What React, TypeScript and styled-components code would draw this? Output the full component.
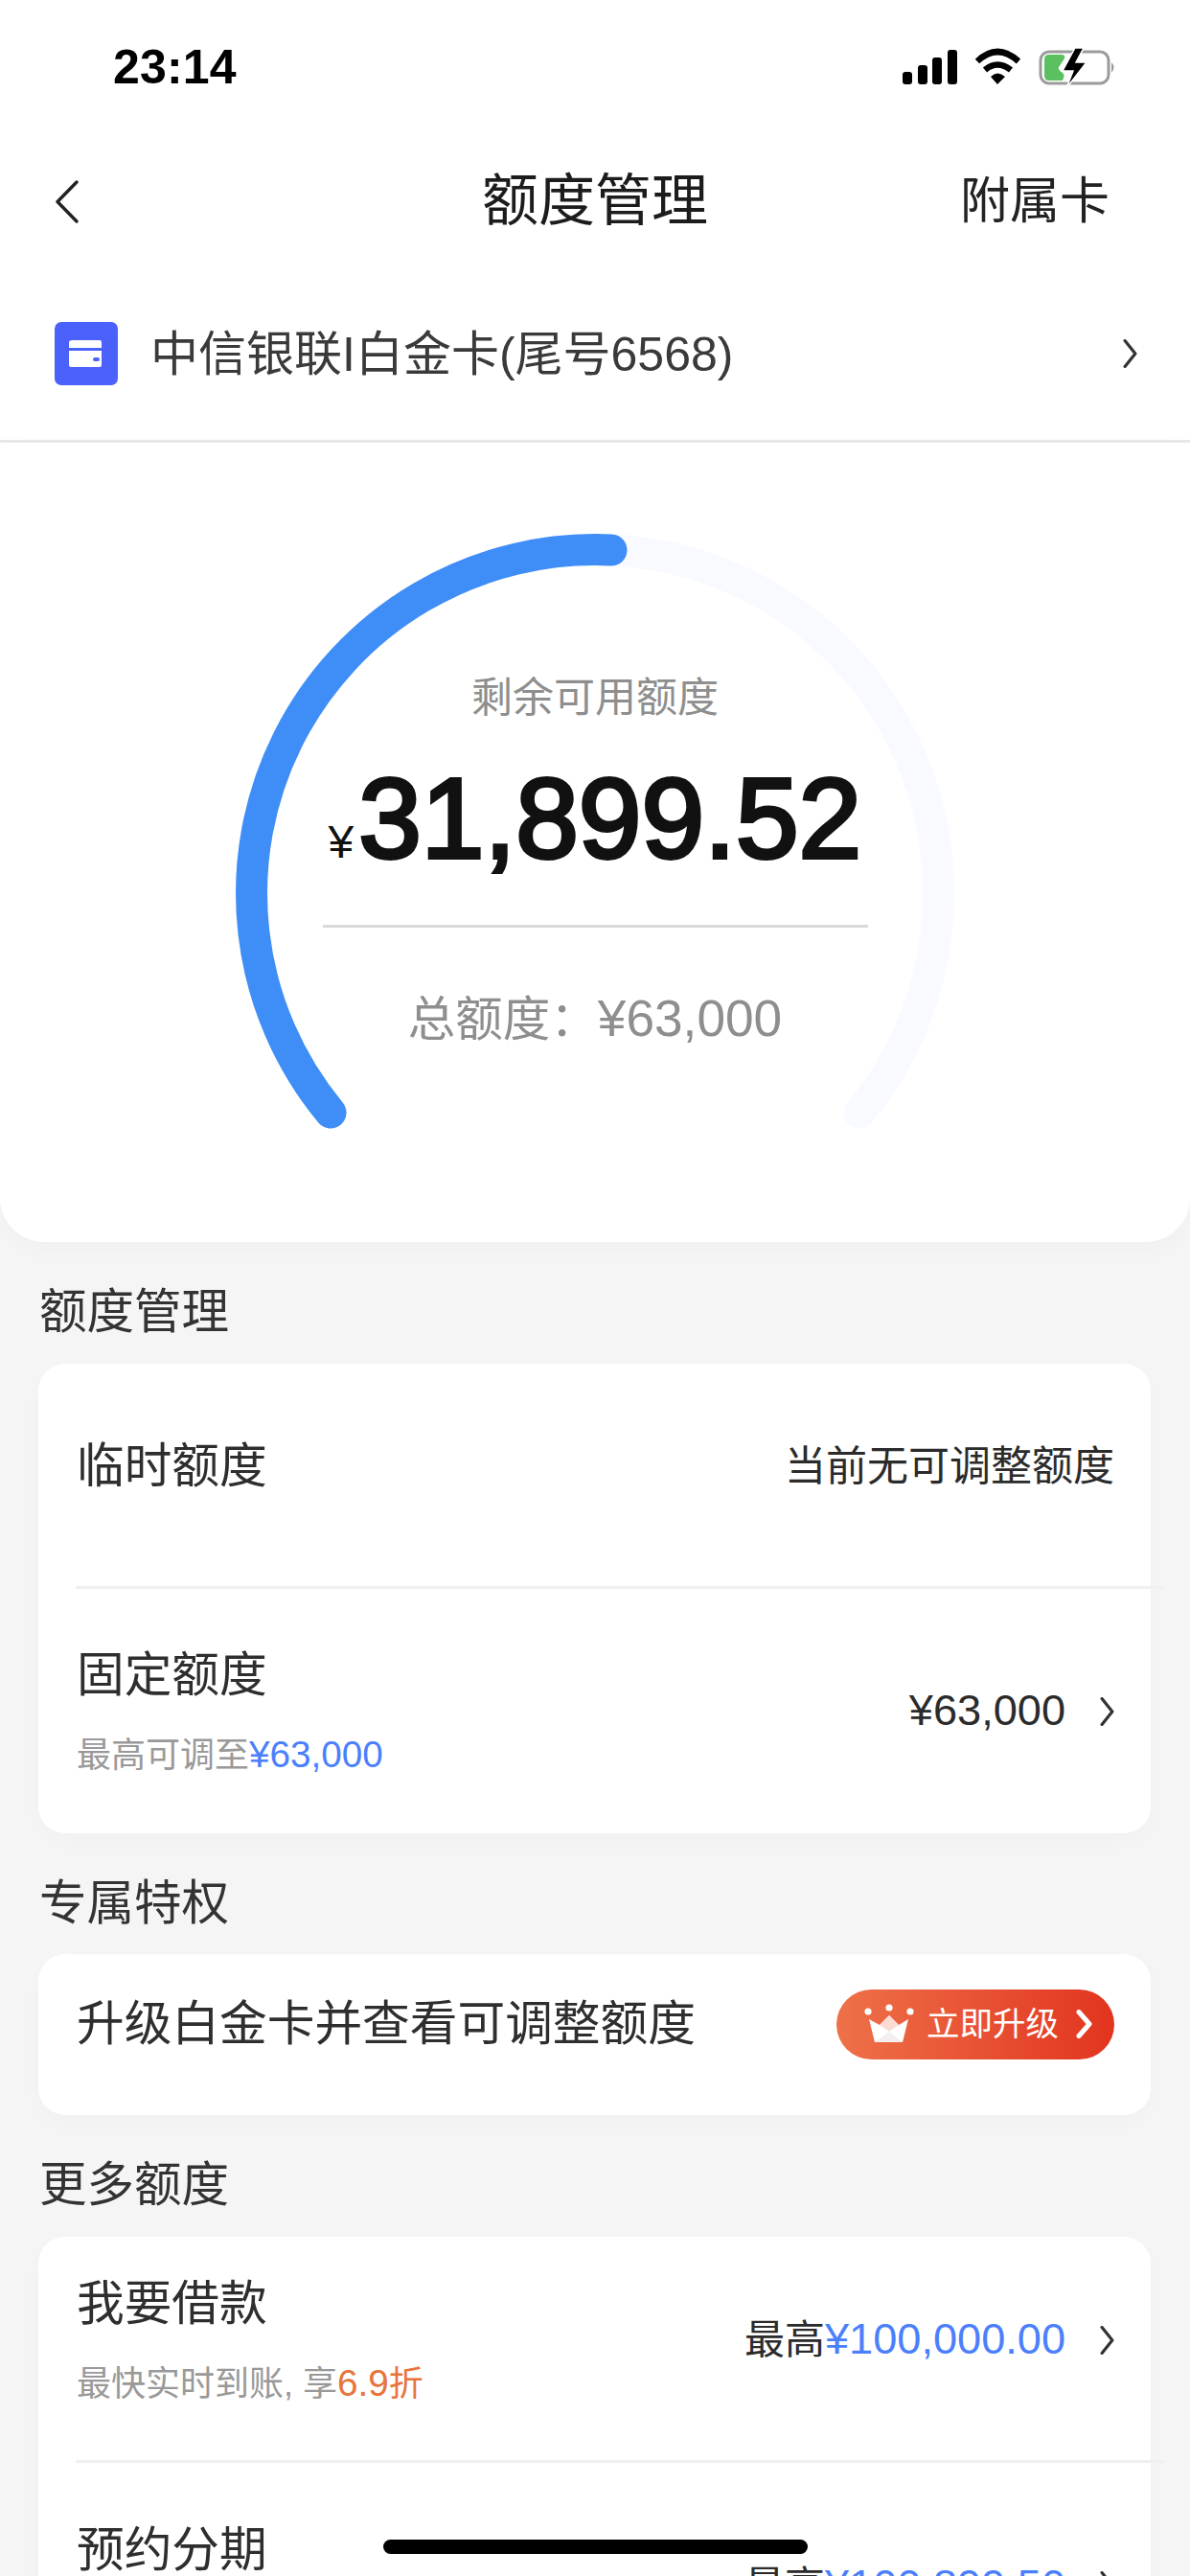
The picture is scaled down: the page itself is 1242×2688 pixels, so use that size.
import React from "react";
import styled, { createGlobalStyle } from "styled-components";

const Global = createGlobalStyle`
  html, body { margin: 0; padding: 0; background: #f5f5f5; }
  body { width: 1242px; height: 2688px; overflow: hidden; font-family: "Liberation Sans", "Noto Sans CJK SC", sans-serif; }
  * { box-sizing: border-box; }
`;

const Page = styled.div`
  position: relative;
  width: 1242px;
  height: 2688px;
  overflow: hidden;
  background: #f5f5f5;
  color: #333;
`;
const Header = styled.header`
  background: #fff;
`;
const StatusBar = styled.div`
  height: 140px;
  padding: 0 78px 0 118px;
  display: flex;
  align-items: center;
  justify-content: space-between;
`;
const Time = styled.span`
  font-size: 50px;
  font-weight: 700;
  color: #000;
  letter-spacing: 0.2px;
`;
const Nav = styled.nav`
  height: 138px;
  padding: 2px 57px 0;
  display: grid;
  grid-template-columns: 1fr auto 1fr;
  align-items: center;
`;
const NavTitle = styled.h1`
  margin: 0;
  font-size: 59px;
  font-weight: 400;
  line-height: 70px;
  color: #1c1c1c;
`;
const NavAction = styled.span`
  justify-self: end;
  padding-right: 27px;
  font-size: 52px;
  line-height: 60px;
  color: #222;
`;
const CardBar = styled.div`
  height: 184px;
  padding: 0 55px 0 57px;
  display: flex;
  align-items: center;
  gap: 34px;
  border-bottom: 3px solid #e8e8e8;
`;
const CardName = styled.span`
  flex: 1;
  padding-top: 2px;
  font-size: 50px;
  line-height: 60px;
  color: #3a3a3a;
`;
const Gauge = styled.section`
  position: relative;
  height: 834px;
  padding-top: 238px;
  display: flex;
  flex-direction: column;
  align-items: center;
  background: #fff;
  border-radius: 0 0 46px 46px;
  box-shadow: 0 8px 24px rgba(0, 0, 0, 0.025);
`;
const GaugeArc = styled.svg`
  position: absolute;
  left: 0;
  top: 0;
`;
const GaugeLabel = styled.div`
  position: relative;
  font-size: 43px;
  line-height: 56px;
  color: #8e8e8e;
`;
const Amount = styled.div`
  position: relative;
  margin-top: 31px;
  width: 569px;
  padding: 0 0 0 6px;
  display: flex;
  align-items: baseline;
  height: 134px;
  line-height: 134px;
  color: #111;
`;
const AmountUnit = styled.span`
  font-size: 48px;
  margin-right: 5px;
`;
const AmountValue = styled.span`
  font-size: 118px;
  font-weight: 400;
  -webkit-text-stroke: 4px #111;
`;
const GaugeRule = styled.div`
  position: relative;
  margin-top: 44px;
  width: 569px;
  height: 3px;
  background: #d9d9d9;
`;
const GaugeTotal = styled.div`
  position: relative;
  margin-top: 65px;
  font-size: 49.5px;
  line-height: 60px;
  color: #8e8e8e;
`;
const SectionTitle = styled.h2<{ $h: number }>`
  height: ${(p) => p.$h}px;
  margin: 0;
  padding: 43px 0 0 41px;
  font-size: 49.5px;
  font-weight: 400;
  line-height: 60px;
  color: #333;
`;
const Card = styled.div`
  width: 1161px;
  margin-left: 40px;
  background: #fff;
  border-radius: 28px;
  box-shadow: 0 8px 24px rgba(0, 0, 0, 0.02);
`;
const Row = styled.div<{ $h: number; $pb?: number }>`
  height: ${(p) => p.$h}px;
  padding: 0 38px ${(p) => p.$pb ?? 0}px 40px;
  display: flex;
  align-items: center;
  justify-content: space-between;
`;
const Divider = styled.div`
  height: 3px;
  margin: 0 -15px 0 39px;
  background: #f0f0f0;
`;
const RowLeft = styled.div`
  height: 135px;
  display: flex;
  flex-direction: column;
`;
const RowTitle = styled.div`
  font-size: 49.7px;
  line-height: 60px;
  color: #2e2e2e;
`;
const RowSub = styled.div`
  margin-top: 31px;
  font-size: 36px;
  line-height: 44px;
  color: #999;
`;
const RowRight = styled.div`
  display: flex;
  align-items: center;
  gap: 36px;
`;
const RowValue = styled.span<{ $size?: number }>`
  font-size: ${(p) => p.$size ?? 42}px;
  line-height: 50px;
  color: #2b2b2b;
`;
const Num = styled.span`
  font-size: 1.075em;
`;
const Blue = styled.span`
  color: #4b7ffb;
`;
const Orange = styled.span`
  color: #e8743b;
`;
const Upgrade = styled.div`
  width: 290px;
  height: 73px;
  padding-left: 29px;
  display: flex;
  align-items: center;
  border-radius: 37px;
  background: linear-gradient(90deg, #ee7149 0%, #e2341f 100%);
  color: #fff;
`;
const UpgradeText = styled.span`
  margin: 0 18px 0 13px;
  font-size: 34.5px;
  line-height: 40px;
`;
const HomeBar = styled.div`
  position: absolute;
  left: 400px;
  top: 2650px;
  width: 443px;
  height: 15px;
  border-radius: 8px;
  background: #000;
`;
const StatusIcons = styled.svg`
  display: block;
`;

const Chevron = ({ w, h, color = "#333", sw = 3.2 }: { w: number; h: number; color?: string; sw?: number }) => (
  <svg width={w} height={h} viewBox={`0 0 ${w} ${h}`} fill="none">
    <path d={`M${sw / 2 + 0.5} ${sw / 2} L${w - sw / 2 - 0.5} ${h / 2} L${sw / 2 + 0.5} ${h - sw / 2}`} stroke={color} strokeWidth={sw} strokeLinecap="round" strokeLinejoin="round" />
  </svg>
);

const BackChevron = () => (
  <svg width="25" height="45" viewBox="0 0 25 45" fill="none">
    <path d="M23 2 L3 22.5 L23 43" stroke="#222" strokeWidth="3.4" strokeLinecap="round" strokeLinejoin="round" />
  </svg>
);

const App = () => (
  <Page>
    <Global />
    <Header>
      <StatusBar>
        <Time>23:14</Time>
        <StatusIcons width="226" height="44" viewBox="937 48 226 44">
          <rect x="941" y="75" width="10" height="13" rx="3" fill="#000" />
          <rect x="957" y="68" width="10" height="20" rx="3" fill="#000" />
          <rect x="972" y="60" width="10" height="28" rx="3" fill="#000" />
          <rect x="988" y="52" width="10" height="36" rx="3" fill="#000" />
          <path d="M1019 64 Q1040 44 1062 64" fill="none" stroke="#000" strokeWidth="6.5" />
          <path d="M1027 73 Q1040 62 1054 73" fill="none" stroke="#000" strokeWidth="6.5" />
          <path d="M1033 80 Q1040 73 1048 80 L1040 88 Z" fill="#000" />
          <rect x="1085" y="54" width="71" height="33" rx="9" fill="none" stroke="#9b9b9b" strokeWidth="3" />
          <path d="M1159 65 Q1164 70 1159 76 Z" fill="#9b9b9b" />
          <path d="M1094 57 H1107 Q1111 57 1110 61 L1104 70 Q1103 73 1108 76 Q1111 78 1108 84 H1094 Q1089 84 1089 79 V62 Q1089 57 1094 57 Z" fill="#5ac060" />
          <path d="M1121 50 L1108 74 H1119 L1112 92 L1133 65 H1122 L1130 50 Z" fill="#000" stroke="#fff" strokeWidth="1.5" />
        </StatusIcons>
      </StatusBar>
      <Nav>
        <BackChevron />
        <NavTitle>额度管理</NavTitle>
        <NavAction>附属卡</NavAction>
      </Nav>
      <CardBar>
        <svg width="66" height="66" viewBox="0 0 66 66">
          <rect width="66" height="66" rx="7" fill="#4a62fb" />
          <path d="M19 19 H47 Q49 19 49 21 V27 H15 V21 Q15 19 19 19 Z" fill="#fff" />
          <path d="M15 30 H49 V45 Q49 47 47 47 H17 Q15 47 15 45 Z" fill="#fff" />
          <rect x="40" y="37" width="7" height="4" rx="2" fill="#4a62fb" />
        </svg>
        <CardName>中信银联I白金卡(尾号6568)</CardName>
        <Chevron w={15} h={30} color="#333" />
      </CardBar>
    </Header>
    <Gauge>
      <GaugeArc width="1242" height="834" viewBox="0 462 1242 834" fill="none">
        <path d="M345 1161 A358.6 358.6 0 1 1 897 1161" stroke="#f8faff" strokeWidth="33" strokeLinecap="round" />
        <path d="M345 1161 A358.6 358.6 0 0 1 638 574" stroke="#3f8ef7" strokeWidth="33" strokeLinecap="round" />
      </GaugeArc>
      <GaugeLabel>剩余可用额度</GaugeLabel>
      <Amount>
        <AmountUnit>¥</AmountUnit>
        <AmountValue>31,899.52</AmountValue>
      </Amount>
      <GaugeRule />
      <GaugeTotal>
        总额度：<Num>¥63,000</Num>
      </GaugeTotal>
    </Gauge>
    <SectionTitle $h={127}>额度管理</SectionTitle>
    <Card>
      <Row $h={232} $pb={18}>
        <RowTitle>临时额度</RowTitle>
        <RowValue $size={43}>当前无可调整额度</RowValue>
      </Row>
      <Divider />
      <Row $h={255}>
        <RowLeft>
          <RowTitle>固定额度</RowTitle>
          <RowSub>
            最高可调至
            <Blue>
              <Num>¥63,000</Num>
            </Blue>
          </RowSub>
        </RowLeft>
        <RowRight>
          <RowValue>
            <Num>¥63,000</Num>
          </RowValue>
          <Chevron w={15} h={30} />
        </RowRight>
      </Row>
    </Card>
    <SectionTitle $h={126}>专属特权</SectionTitle>
    <Card>
      <Row $h={168} $pb={22}>
        <RowTitle>升级白金卡并查看可调整额度</RowTitle>
        <Upgrade>
          <svg width="52" height="42" viewBox="0 0 52 42" fill="none">
            <circle cx="4" cy="8" r="3.6" fill="#fff" />
            <circle cx="26" cy="4" r="3.6" fill="#fff" />
            <circle cx="48" cy="8" r="3.6" fill="#fff" />
            <path d="M5 16 L16 22 L26 12 L36 22 L46 16 L40 40 H11 Z" fill="#fff" />
            <path d="M26 12 L36 22 L26 29 L16 22 Z" fill="#fbdcd4" />
            <path d="M11 40 L26 29 L40 40 Z" fill="#f4eeee" />
          </svg>
          <UpgradeText>立即升级</UpgradeText>
          <Chevron w={17} h={30} color="#fff" sw={5} />
        </Upgrade>
      </Row>
    </Card>
    <SectionTitle $h={127}>更多额度</SectionTitle>
    <Card>
      <Row $h={233} $pb={18}>
        <RowLeft>
          <RowTitle>我要借款</RowTitle>
          <RowSub>
            最快实时到账, 享
            <Orange>
              <Num>6.9</Num>折
            </Orange>
          </RowSub>
        </RowLeft>
        <RowRight>
          <RowValue>
            最高
            <Blue>
              <Num>¥100,000.00</Num>
            </Blue>
          </RowValue>
          <Chevron w={15} h={30} />
        </RowRight>
      </Row>
      <Divider />
      <Row $h={256}>
        <RowLeft>
          <RowTitle>预约分期</RowTitle>
        </RowLeft>
        <RowRight>
          <RowValue>
            最高
            <Blue>
              <Num>¥100,899.50</Num>
            </Blue>
          </RowValue>
          <Chevron w={15} h={30} />
        </RowRight>
      </Row>
    </Card>
    <HomeBar />
  </Page>
);

export default App;
